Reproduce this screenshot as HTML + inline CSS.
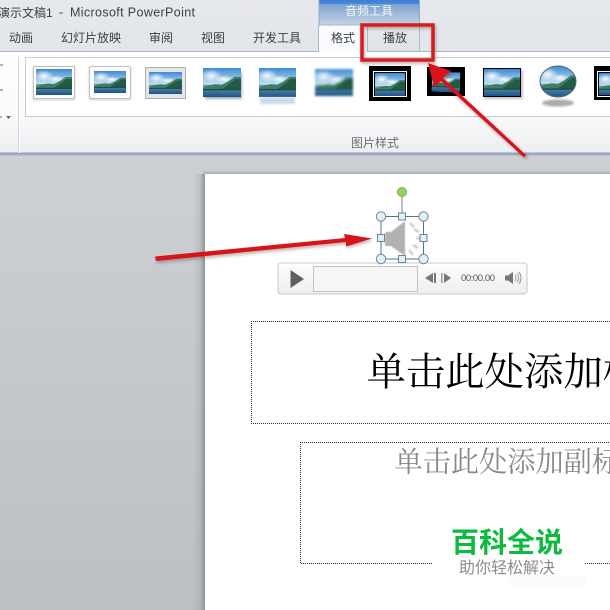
<!DOCTYPE html>
<html><head><meta charset="utf-8"><style>
html,body{margin:0;padding:0;width:610px;height:610px;overflow:hidden;background:#c4c7cb}
svg{display:block}
.ui{font-family:"Liberation Sans","Noto Sans CJK SC",sans-serif;font-size:12px;fill:#3c4046}
</style></head><body>
<svg width="610" height="610" viewBox="0 0 610 610" xmlns="http://www.w3.org/2000/svg">
<defs>
<linearGradient id="top" x1="0" y1="0" x2="0" y2="1"><stop offset="0" stop-color="#e6e8ec"/><stop offset="1" stop-color="#e2e5e9"/></linearGradient>
<linearGradient id="rib" x1="0" y1="0" x2="0" y2="1"><stop offset="0" stop-color="#fff"/><stop offset=".6" stop-color="#fbfbfc"/><stop offset="1" stop-color="#eceef0"/></linearGradient>
<linearGradient id="bg" x1="0" y1="0" x2="0" y2="1"><stop offset="0" stop-color="#cdd0d4"/><stop offset="1" stop-color="#bcbfc3"/></linearGradient>
<linearGradient id="shl" x1="0" y1="0" x2="1" y2="0"><stop offset="0" stop-color="#8e9295" stop-opacity="0"/><stop offset=".6" stop-color="#8e9295" stop-opacity=".25"/><stop offset="1" stop-color="#8e9295"/></linearGradient>
<linearGradient id="sht" x1="0" y1="0" x2="0" y2="1"><stop offset="0" stop-color="#8e9295" stop-opacity="0"/><stop offset="1" stop-color="#8e9295" stop-opacity=".55"/></linearGradient>
<linearGradient id="aud" x1="0" y1="0" x2="0" y2="1"><stop offset="0" stop-color="#3f80d6"/><stop offset=".14" stop-color="#4484d8"/><stop offset=".18" stop-color="#7fa3cf"/><stop offset="1" stop-color="#c4d3e4"/></linearGradient>
<linearGradient id="tab2" x1="0" y1="0" x2="0" y2="1"><stop offset="0" stop-color="#e6e9ec"/><stop offset="1" stop-color="#dfe2e6"/></linearGradient>
<linearGradient id="sky" x1="0" y1="0" x2="0" y2="1"><stop offset="0" stop-color="#3d8ad6"/><stop offset=".6" stop-color="#cfe8ee"/></linearGradient>
<linearGradient id="water" x1="0" y1="0" x2="0" y2="1"><stop offset="0" stop-color="#6aa0b4"/><stop offset="1" stop-color="#1d5288"/></linearGradient>
<linearGradient id="pl" x1="0" y1="0" x2="0" y2="1"><stop offset="0" stop-color="#fdfdfd"/><stop offset="1" stop-color="#eeeeee"/></linearGradient>
<radialGradient id="cl" cx=".5" cy=".5" r=".5"><stop offset="0" stop-color="#fff" stop-opacity=".95"/><stop offset="1" stop-color="#fff" stop-opacity="0"/></radialGradient>
<pattern id="dots" width="2" height="2" patternUnits="userSpaceOnUse"><rect width="1" height="1" fill="#2a2a2a"/><rect x="1" y="1" width="1" height="1" fill="#2a2a2a"/></pattern>
<filter id="b1" x="-20%" y="-20%" width="140%" height="140%"><feGaussianBlur stdDeviation="1"/></filter>
<filter id="b2" x="-20%" y="-50%" width="140%" height="200%"><feGaussianBlur stdDeviation="1.5"/></filter>
<filter id="soft" x="-10%" y="-10%" width="120%" height="120%"><feGaussianBlur stdDeviation=".5"/></filter>
<symbol id="pic" viewBox="0 0 36 26" preserveAspectRatio="none">
<rect width="36" height="26" fill="url(#sky)"/>
<ellipse cx="8" cy="7" rx="10" ry="6" fill="url(#cl)"/>
<ellipse cx="20" cy="10" rx="9" ry="3.500" fill="url(#cl)"/>
<rect y="15" width="36" height="11" fill="url(#water)"/>
<path d="M0 18 L6 15.500 L12 14.500 L18 15 L24 12 L30 8 L36 8 L36 19 L20 19.500 L0 19.500Z" fill="#3d7d66"/>
<path d="M18 19 L25 14 L31 10 L36 10 L36 19Z" fill="#225a44"/>
<rect y="18.800" width="36" height="1.200" fill="#1c4a44"/>
</symbol>
</defs>

<!-- app background -->
<rect y="154" width="610" height="456" fill="url(#bg)"/>
<rect x="193" y="174" width="12" height="436" fill="url(#shl)"/>
<rect x="203" y="170" width="407" height="4" fill="url(#sht)"/>
<rect x="205" y="174" width="405" height="436" fill="#fff"/>

<!-- title bar & tabs -->
<rect width="610" height="52" fill="url(#top)"/>
<rect y="51" width="610" height="1.200" fill="#a9b8c9"/>
<rect y="52" width="610" height="101" fill="url(#rib)"/>
<rect y="152.500" width="610" height="2" fill="#8ea3bc"/>
<rect y="154.500" width="610" height="1.500" fill="#b5bdc8"/>

<text class="ui" x="-2" y="17">演示文稿1</text>
<text x="59" y="16.500" font-family="Liberation Sans" font-size="12.500" fill="#3c4046">-</text>
<text x="70" y="16.500" font-family="Liberation Sans" font-size="12.500" fill="#3c4046" textLength="125">Microsoft PowerPoint</text>

<text class="ui" x="9" y="42">动画</text>
<text class="ui" x="61" y="42">幻灯片放映</text>
<text class="ui" x="149" y="42">审阅</text>
<text class="ui" x="201" y="42">视图</text>
<text class="ui" x="253" y="42">开发工具</text>

<rect x="319" y="0" width="101" height="25" fill="url(#aud)"/>
<path d="M319 0V25M419.500 0V25" stroke="#8cabd0" fill="none"/>
<text class="ui" x="345" y="15" style="fill:#f4f7fa">音频工具</text>
<path d="M367 25H420V51H367Z" fill="url(#tab2)"/>
<path d="M419.500 25V51" stroke="#b2bcc8" fill="none"/>
<path d="M318.500 52V28Q318.500 25 321 25H365Q367.500 25 367.500 28V51" fill="#fafbfc" stroke="#a9b8c9"/>
<rect x="319" y="50" width="48" height="3" fill="#fdfdfe"/>
<text class="ui" x="331" y="42">格式</text>
<text class="ui" x="383" y="42">播放</text>

<!-- ribbon -->
<rect x="18" y="57" width="1" height="96" fill="#d5d8dc"/>
<rect x="19" y="57" width="1" height="96" fill="#fff"/>
<path d="M0 65h3M0 90h3M0 117h2" stroke="#666"/>
<path d="M6 116h5l-2.500 3z" fill="#666"/>
<rect x="25.500" y="57.500" width="590" height="59" fill="#fff" stroke="#c9cbce"/>
<text class="ui" x="351" y="147" style="fill:#6b6e72">图片样式</text>

<!-- thumbnails -->
<rect x="33" y="67" width="42" height="33" fill="#aaa" opacity=".6" filter="url(#b1)"/>
<rect x="33.500" y="66.500" width="41" height="32" fill="#fff" stroke="#c0c0c0"/>
<use href="#pic" x="36" y="69" width="36" height="26"/>

<rect x="89" y="67" width="42" height="33" fill="#aaa" opacity=".6" filter="url(#b1)"/>
<rect x="89.500" y="66.500" width="41" height="32" rx="2" fill="#fdfdfd" stroke="#c0c0c0"/>
<use href="#pic" x="94" y="71" width="32" height="22"/>

<rect x="145.500" y="67.500" width="40" height="31" fill="#e6e6e6" stroke="#b0b0b0"/>
<use href="#pic" x="149" y="72" width="33" height="22"/>

<rect x="205" y="72" width="37" height="27" fill="#5a6a80" opacity=".55" filter="url(#b1)"/>
<use href="#pic" x="203" y="68" width="38" height="29"/>

<use href="#pic" x="259" y="68" width="37" height="29"/>
<rect x="260" y="97" width="35" height="7" fill="#a9c3d6" opacity=".6" filter="url(#b1)"/>

<g filter="url(#b1)"><use href="#pic" x="315" y="69" width="38" height="27"/></g>

<rect x="369" y="66" width="42" height="35" fill="#000"/>
<rect x="373.500" y="71.500" width="33" height="25" fill="none" stroke="#fff"/>
<use href="#pic" x="375" y="73" width="30" height="23"/>

<rect x="427" y="67" width="38" height="29" fill="#000"/>
<use href="#pic" x="432" y="72" width="28" height="20" transform="rotate(2 447 82)"/>

<rect x="484" y="70" width="39" height="29" fill="#888" opacity=".5" filter="url(#b1)"/>
<rect x="483" y="68" width="38" height="29" fill="#000"/>
<use href="#pic" x="484" y="69" width="36" height="27"/>

<ellipse cx="558" cy="103" rx="16" ry="3.500" fill="#aaa" filter="url(#b1)"/>
<clipPath id="el"><ellipse cx="558" cy="81.500" rx="18" ry="15.500"/></clipPath>
<g clip-path="url(#el)"><use href="#pic" x="539" y="66" width="38" height="31"/></g>
<ellipse cx="558" cy="81.500" rx="18" ry="15.500" fill="none" stroke="#4d6a78"/>

<rect x="594" y="66" width="30" height="34" fill="#000"/>
<rect x="597.500" y="71.500" width="30" height="25" fill="none" stroke="#fff"/>
<use href="#pic" x="599" y="73" width="30" height="22"/>

<!-- slide placeholders: dotted outlines -->
<g fill="url(#dots)">
<rect x="251" y="321" width="359" height="1"/>
<rect x="251" y="423" width="359" height="1"/>
<rect x="251" y="321" width="1" height="103"/>
<rect x="300" y="442" width="310" height="1"/>
<rect x="300" y="563" width="310" height="1"/>
<rect x="300" y="442" width="1" height="122"/>
</g>
<text x="366.500" y="385.500" font-family="Liberation Serif,'Noto Serif CJK SC',serif" font-size="39.400" fill="#000">单击此处添加标题</text>
<text x="394.500" y="471.500" font-family="Liberation Serif,'Noto Serif CJK SC',serif" font-size="28.200" fill="#8a8a8a">单击此处添加副标题</text>

<!-- player -->
<rect x="278" y="263" width="249" height="31" rx="3" fill="url(#pl)" stroke="#cacaca"/>
<path d="M290.500 270L304 279L290.500 288Z" fill="#5f5f5f"/>
<rect x="313.500" y="266.500" width="104" height="25" fill="#f6f6f6" stroke="#c4c4c4"/>
<path d="M425 278L433 273V283Z" fill="#777"/><rect x="434" y="273" width="2" height="10" fill="#777"/>
<rect x="441" y="273" width="1.500" height="10" fill="#999"/><path d="M444 273L451 278L444 283Z" fill="#777"/>
<text x="461" y="281" font-family="Liberation Sans" font-size="9.500" fill="#555" textLength="34">00:00.00</text>
<path d="M505 275.500h3l5-3.500v12l-5-3.500h-3z" fill="#777"/>
<path d="M515 275q2 3 0 6M517 273.500q3.500 4.500 0 9M519 272q4 6 0 12" fill="none" stroke="#999"/>

<!-- speaker + selection -->
<g filter="url(#soft)">
<path d="M385 232H391L405 221V256L391 246H385Z" fill="#b0b1b1"/>
<path d="M410 223l4 4M414 229l5 3M416 238l5 1M413 245l5 3M409 250l4 5" stroke="#cdcdcd" stroke-width="2.500" fill="none"/>
</g>
<path d="M402 196V216" stroke="#8a98a4" stroke-width="1.200"/>
<rect x="381" y="216.500" width="42.500" height="42.500" fill="none" stroke="#5d7080" stroke-width="1"/>
<circle cx="402" cy="192" r="4.500" fill="#8fd851" stroke="#7ba87a"/>
<g fill="#e2eff5" stroke="#6d8596">
<circle cx="381" cy="216.500" r="4.700"/><circle cx="423.500" cy="216.500" r="4.700"/>
<circle cx="381" cy="259" r="4.700"/><circle cx="423.500" cy="259" r="4.700"/>
<rect x="398.500" y="213" width="7" height="7"/><rect x="398.500" y="255.500" width="7" height="7"/>
<rect x="377.500" y="234.500" width="7" height="7"/><rect x="420" y="234.500" width="7" height="7"/>
</g>

<!-- annotations: shadows -->
<g filter="url(#b2)" opacity=".4" fill="#5a3030">
<path d="M155 257L345 238L344 234L372 238.500L346 246L346 242L156 261Z" transform="translate(1 2)"/>
<path d="M428 63L451 71L443 79L526 155L524 157.500L440 81.500L434 87Z" transform="translate(2 2)"/>
<rect x="362" y="25" width="71" height="35" fill="none" stroke="#5a3030" stroke-width="3.500" transform="translate(1 2)"/>
</g>
<!-- arrow 1 -->
<path d="M155 256.500L345 238L344 234L372 238.500L346 246.500L346 242L156 261Z" fill="#d8141a"/>
<!-- arrow 2 -->
<path d="M428 63L451 71L443 78L526 155L524 157.500L441 81L434 87Z" fill="#d8141a"/>
<!-- red box -->
<rect x="362" y="25" width="71" height="35" fill="none" stroke="#d61c1e" stroke-width="3.500"/>

<!-- watermark -->
<rect x="432" y="524" width="153" height="55" fill="#fff"/>
<rect x="507" y="575" width="79" height="11" fill="#fcfcfc"/>
<text x="451" y="552" font-family="Liberation Sans,'Noto Sans CJK SC',sans-serif" font-size="28" font-weight="700" fill="#0cbb3e">百科全说</text>
<text x="459" y="573" font-family="Liberation Sans,'Noto Sans CJK SC',sans-serif" font-size="16" fill="#8c8c8c">助你轻松解决</text>
</svg>
</body></html>
